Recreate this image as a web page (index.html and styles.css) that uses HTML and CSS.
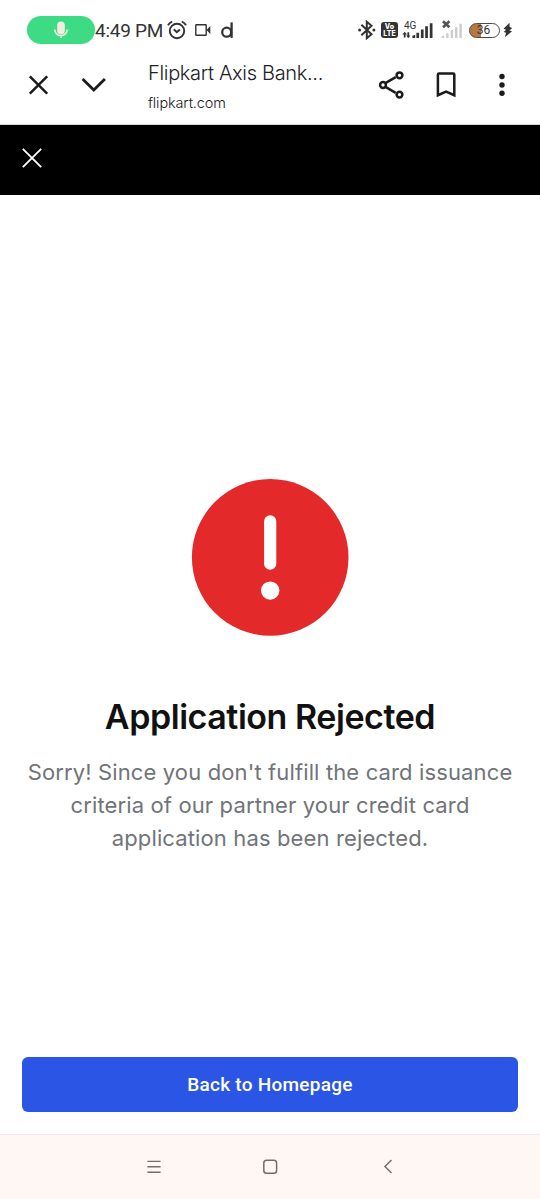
FILE: index.html
```html
<!DOCTYPE html>
<html lang="en">
<head>
<meta charset="utf-8">
<meta name="viewport" content="width=device-width, initial-scale=1">
<title>Flipkart Axis Bank</title>
<link rel="stylesheet" href="styles.css">
</head>
<body>
<div class="screen">
  <div class="status">
    <div class="mic-pill">
      <svg width="16" height="20" viewBox="0 0 16 20"><rect x="4.2" y="1.5" width="7.6" height="12.8" rx="3.8" fill="#f1eee0"/><path d="M1.8 9.5a6.2 6.2 0 0 0 12.4 0M8 15.8v2.2" fill="none" stroke="#f1eee0" stroke-width="1.7"/></svg>
    </div>
    <span class="clock">4:49 PM</span>
    <svg class="alarm" width="20" height="20" viewBox="0 0 20 20" fill="none" stroke="#333" stroke-width="1.9"><circle cx="10" cy="11" r="7.2"/><path d="M1 5.2Q2.3 2.7 5.2 1.6M14.8 1.6Q17.7 2.7 19 5.2M6.8 9.2l3 2.9 3.2-2.7"/></svg>
    <svg class="video" width="16" height="14" viewBox="0 0 16 14"><rect x=".8" y="1.8" width="10.4" height="10.4" rx=".5" fill="none" stroke="#333" stroke-width="1.4"/><path d="M11.5 7 15.3 3v8z" fill="#333"/></svg>
    <svg class="dlogo" width="14" height="18" viewBox="0 0 14 18" fill="none" stroke="#333" stroke-width="2.3"><circle cx="6.7" cy="11.2" r="4.5"/><path d="M11.6 1.4v15.5"/></svg>
    <svg class="bluetooth" width="20" height="20" viewBox="0 0 20 20"><path d="M4.4 4.8 14.5 14.2 9.8 18.2V1.8L14.5 5.8 4.4 15.2" fill="none" stroke="#333" stroke-width="2"/><circle cx="2.6" cy="10" r="1.5" fill="#333"/><circle cx="16.9" cy="10" r="1.5" fill="#333"/></svg>
    <span class="volte"><span>Vo</span><span>LTE</span></span>
    <div class="signal">
      <span class="net">4G</span>
      <svg width="32" height="18" viewBox="0 0 32 18" fill="#333"><path d="M2.7 10.8 5 13.5H3.6v3H1.8v-3H.4zM6.3 17.2 4.2 14.4h1.2v-3.2h1.8v3.2h1.2zM10.4 14.8l2.8-1V17h-2.8zM14.4 11.8h2.7V17h-2.7zM18.9 8.5h2.7V17h-2.7zM23.2 5.2h2.7V17h-2.7zM27.8 2.2h2.7V17h-2.7z"/></svg>
    </div>
    <svg class="nosim" width="22" height="20" viewBox="0 0 22 20"><path d="M1 15.8h2.2V18H.5zM5.2 13.3h2.4V18H5.2zM9.7 10h2.4v8H9.7zM14 7.2h2.4V18H14zM18.4 3.7h2.4V18h-2.4z" fill="#ccc"/><path d="m2 1.2 6.4 6M8.4 1.2 2 7.2" stroke="#555" stroke-width="2.6"/></svg>
    <div class="battery"><span>36</span></div>
    <svg class="bolt" width="10" height="16" viewBox="0 0 10 16" fill="#333"><path d="M6.5.7.5 6.8l2.6 1L.7 10l2.4.8-1.3 4.5 7.2-6-2.6-.9 2.8-2.5-2.6-.9z"/></svg>
  </div>
  <header class="toolbar">
    <svg class="tab-close" width="20" height="20" viewBox="0 0 20 20"><path d="m1.8 1.3 17.4 17.4M19.2 1.3 1.8 18.7" stroke="#1b1b1b" stroke-width="2.5"/></svg>
    <svg class="chevron" width="26" height="16" viewBox="0 0 26 16"><path d="m1.6 2.1 11.2 11L23.9 2.1" fill="none" stroke="#1b1b1b" stroke-width="2.8"/></svg>
    <div class="page-info">
      <span class="page-title">Flipkart Axis Bank...</span>
      <span class="page-url">flipkart.com</span>
    </div>
    <svg class="share" width="28" height="30" viewBox="0 0 28 30" fill="none" stroke="#1b1b1b" stroke-width="2.5"><path d="m7.4 13.2 10.3-6M7.4 16.8l10.3 6"/><circle cx="5" cy="15" r="2.9"/><circle cx="21.5" cy="5.3" r="2.9"/><circle cx="21.5" cy="24.6" r="2.9"/></svg>
    <svg class="bookmark" width="20" height="26" viewBox="0 0 20 26"><path d="M1.9 23.2V2.5Q1.9 1.4 3 1.4h14.2q1.1 0 1.1 1.1v20.7l-8.2-3.7z" fill="none" stroke="#1b1b1b" stroke-width="2.5"/></svg>
    <svg class="more" width="6" height="24" viewBox="0 0 6 24" fill="#1b1b1b"><circle cx="3" cy="3.5" r="2.7"/><circle cx="3" cy="12" r="2.7"/><circle cx="3" cy="20.3" r="2.7"/></svg>
  </header>
  <div class="app-bar">
    <svg width="20" height="20" viewBox="0 0 20 20"><path d="m.8.8 18.4 18.4M19.2.8.8 19.2" stroke="#fff" stroke-width="1.8"/></svg>
  </div>
  <main class="content">
    <svg class="alert" width="158" height="158" viewBox="0 0 158 158"><circle cx="79.2" cy="79.4" r="78.3" fill="#e32929"/><rect x="73.1" y="37.3" width="12.2" height="54.5" rx="6.1" fill="#fff"/><circle cx="79.2" cy="112.6" r="9.2" fill="#fff"/></svg>
    <h1 class="heading">Application Rejected</h1>
    <p class="message">Sorry! Since you don't fulfill the card issuance<br>criteria of our partner your credit card<br>application has been rejected.</p>
    <button class="home-button">Back to Homepage</button>
  </main>
  <nav class="system-nav">
    <svg width="14" height="14" viewBox="0 0 14 14"><path d="M.4 1.4h13.2M.4 6.8h13.2M.4 12.2h13.2" stroke="#726d6b" stroke-width="1.4"/></svg>
    <svg width="16" height="16" viewBox="0 0 16 16"><rect x="1.8" y="1.2" width="12.8" height="13" rx="2.8" fill="none" stroke="#726d6b" stroke-width="1.5"/></svg>
    <svg width="10" height="16" viewBox="0 0 10 16"><path d="M8.5 1 2 7.5 8.5 14" fill="none" stroke="#726d6b" stroke-width="1.5"/></svg>
  </nav>
</div>
</body>
</html>
```

FILE: styles.css
```css
* { box-sizing: border-box; }
body { margin: 0; background: #fff; font-family: Inter, "Liberation Sans", sans-serif; }
svg { display: block; flex: none; }
.screen { width: 540px; height: 1199px; display: flex; flex-direction: column; overflow: hidden; }

.status { height: 60px; padding-left: 27px; display: flex; align-items: center; color: #333; flex: none; white-space: nowrap; }
.mic-pill { width: 68px; height: 28px; border-radius: 14px; background: #3ddc84; display: flex; align-items: center; justify-content: center; flex: none; }
.clock { width: 70px; font: 400 19px/24px Roboto, sans-serif; letter-spacing: -0.25px; padding-top: 2px; }
.alarm { margin-left: 2px; }
.video { margin-left: 8px; }
.dlogo { margin-left: 9px; }
.bluetooth { margin-left: 123px; }
.volte { width: 17px; height: 16px; margin-left: 4px; border-radius: 3px; background: #333; color: #fff; font: 800 7px/7px Inter, sans-serif; display: flex; flex-direction: column; align-items: center; justify-content: center; }
.signal { width: 32px; height: 18px; margin-left: 4px; position: relative; }
.net { position: absolute; left: 2px; top: 0; font: 400 10px/9px Roboto, sans-serif; }
.nosim { margin-left: 7px; }
.battery { width: 31px; height: 15px; margin-left: 6px; border: 1.3px solid #554444; border-radius: 8px; background: linear-gradient(90deg, #b47a43 11px, #fff 11px); font: 400 12px/13px Roboto, sans-serif; padding-right: 2px; text-align: center; }
.bolt { margin-left: 3px; }

.toolbar { height: 65px; padding-left: 28px; display: flex; align-items: flex-start; color: #202124; border-bottom: 1px solid #d8d8d8; flex: none; }
.tab-close { margin-top: 15px; }
.chevron { margin: 17px 0 0 33px; }
.page-info { width: 190px; margin-left: 41px; display: flex; flex-direction: column; white-space: nowrap; }
.page-title { font-size: 20px; line-height: 26px; font-weight: 350; letter-spacing: -0.32px; }
.page-url { font-size: 14.5px; line-height: 20px; margin-top: 7px; font-weight: 350; letter-spacing: -0.13px; }
.share { margin: 10px 0 0 40px; }
.bookmark { margin: 12px 0 0 30px; }
.more { margin: 13px 0 0 42.5px; }

.app-bar { height: 70px; padding-left: 22px; padding-top: 23.4px; background: #000; flex: none; }

.content { flex: 1; display: flex; flex-direction: column; align-items: center; }
.alert { margin-top: 283px; }
.heading { margin: 60px 0 0; font-size: 34px; line-height: 42px; font-weight: 600; letter-spacing: -0.45px; color: #111; white-space: nowrap; }
.message { margin: 18px 0 0; font-size: 22px; line-height: 33px; color: #717478; text-align: center; letter-spacing: 0.13px; white-space: nowrap; }
.home-button { width: 496px; height: 55px; margin: auto 0 22px; padding: 0; border: 0; border-radius: 6px; background: #2b56e5; color: #fff; font: 500 19px/24px Roboto, sans-serif; letter-spacing: 0.26px; }

.system-nav { height: 65px; background: #fff7f4; border-top: 1px solid #f3e9e8; display: flex; align-items: center; padding-left: 147px; flex: none; gap: 101px; }
.system-nav svg:last-child { margin-left: 4px; }
```
